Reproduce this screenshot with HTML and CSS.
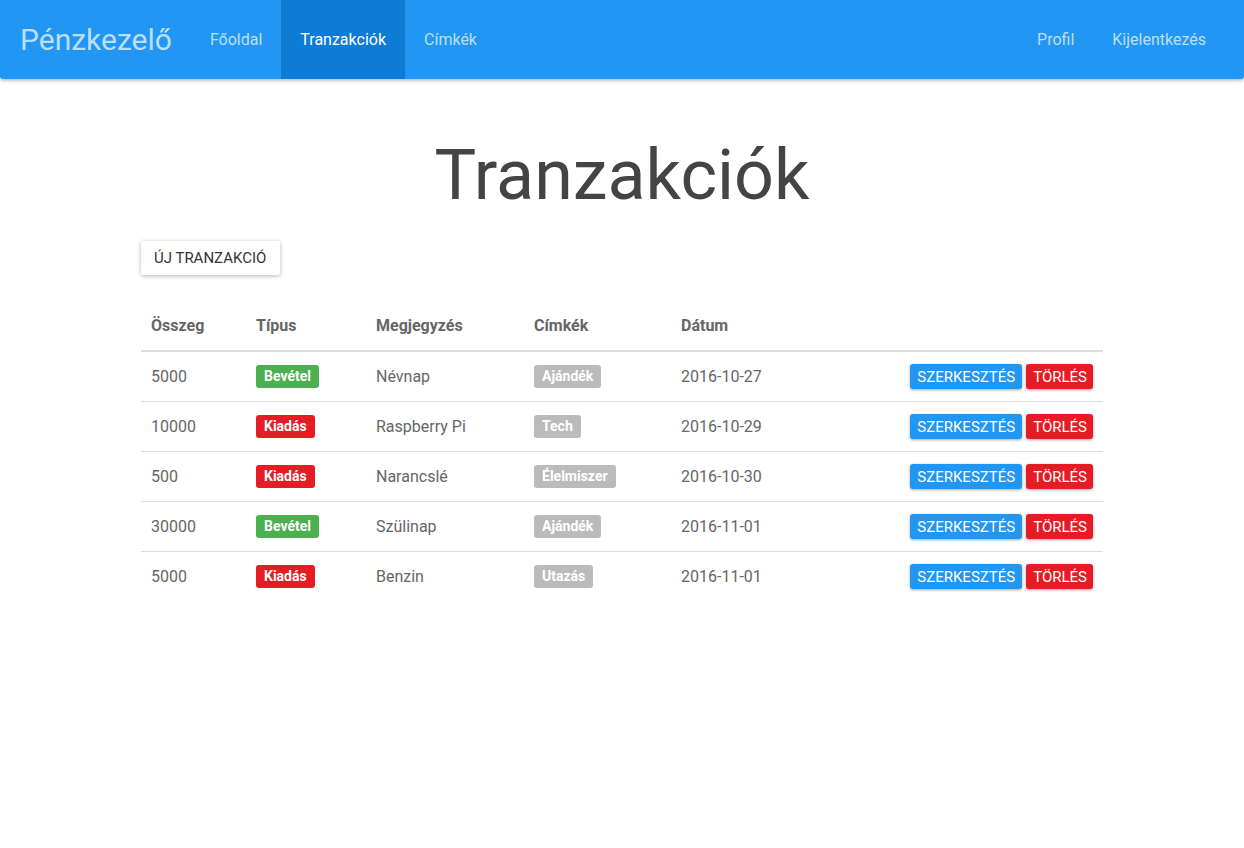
FILE: index.html
```html
<!DOCTYPE html>
<html lang="hu">
<head>
<meta charset="utf-8">
<title>Tranzakciók</title>
<link rel="stylesheet" href="styles.css">
</head>
<body>
<nav class="navbar">
  <a class="brand" href="#">Pénzkezelő</a>
  <ul class="nav">
    <li><a href="#">Főoldal</a></li>
    <li class="active"><a href="#">Tranzakciók</a></li>
    <li><a href="#">Címkék</a></li>
  </ul>
  <ul class="nav nav-right">
    <li><a href="#">Profil</a></li>
    <li><a href="#">Kijelentkezés</a></li>
  </ul>
</nav>
<main class="container">
  <h1 class="title">Tranzakciók</h1>
  <button class="btn-new">Új tranzakció</button>
  <table class="table">
    <thead>
      <tr>
        <th class="c-amount">Összeg</th>
        <th class="c-type">Típus</th>
        <th class="c-note">Megjegyzés</th>
        <th class="c-tags">Címkék</th>
        <th class="c-date">Dátum</th>
        <th class="c-actions"></th>
      </tr>
    </thead>
    <tbody>
      <tr>
        <td>5000</td>
        <td><span class="badge badge-in">Bevétel</span></td>
        <td>Névnap</td>
        <td><span class="badge badge-tag">Ajándék</span></td>
        <td>2016-10-27</td>
        <td class="c-actions"><button class="btn btn-edit">Szerkesztés</button><button class="btn btn-del">Törlés</button></td>
      </tr>
      <tr>
        <td>10000</td>
        <td><span class="badge badge-out">Kiadás</span></td>
        <td>Raspberry Pi</td>
        <td><span class="badge badge-tag">Tech</span></td>
        <td>2016-10-29</td>
        <td class="c-actions"><button class="btn btn-edit">Szerkesztés</button><button class="btn btn-del">Törlés</button></td>
      </tr>
      <tr>
        <td>500</td>
        <td><span class="badge badge-out">Kiadás</span></td>
        <td>Narancslé</td>
        <td><span class="badge badge-tag">Élelmiszer</span></td>
        <td>2016-10-30</td>
        <td class="c-actions"><button class="btn btn-edit">Szerkesztés</button><button class="btn btn-del">Törlés</button></td>
      </tr>
      <tr>
        <td>30000</td>
        <td><span class="badge badge-in">Bevétel</span></td>
        <td>Szülinap</td>
        <td><span class="badge badge-tag">Ajándék</span></td>
        <td>2016-11-01</td>
        <td class="c-actions"><button class="btn btn-edit">Szerkesztés</button><button class="btn btn-del">Törlés</button></td>
      </tr>
      <tr>
        <td>5000</td>
        <td><span class="badge badge-out">Kiadás</span></td>
        <td>Benzin</td>
        <td><span class="badge badge-tag">Utazás</span></td>
        <td>2016-11-01</td>
        <td class="c-actions"><button class="btn btn-edit">Szerkesztés</button><button class="btn btn-del">Törlés</button></td>
      </tr>
    </tbody>
  </table>
</main>
</body>
</html>
```

FILE: styles.css
```css
html, body {
  margin: 0;
  padding: 0;
  background: #fff;
}
body {
  font-family: Roboto, "Liberation Sans", sans-serif;
  color: #666;
  font-size: 16px;
}
a { text-decoration: none; }

.navbar {
  display: flex;
  align-items: stretch;
  height: 79px;
  background: #2196f3;
  border-radius: 0 0 3px 3px;
  box-shadow: 0 1px 4px rgba(0,0,0,0.35);
}
.brand {
  display: flex;
  align-items: center;
  padding: 0 19px 0 20px;
  font-size: 30px;
  color: #bbdefb;
  font-weight: 400;
}
.nav {
  display: flex;
  list-style: none;
  margin: 0;
  padding: 0;
}
.nav-right { margin-left: auto; margin-right: 19px; }
.nav li { display: flex; }
.nav a {
  display: flex;
  align-items: center;
  padding: 0 19px;
  font-size: 16px;
  color: #bbdefb;
}
.nav li.active a {
  background: #0e7bd5;
  color: #fff;
}

.container {
  width: 962px;
  margin: 0 auto;
}
.title {
  margin: 56px 0 26px;
  text-align: center;
  font-size: 70px;
  font-weight: 400;
  line-height: 80px;
  color: #444;
}
.btn-new {
  display: block;
  height: 34px;
  padding: 0 14px 0 13px;
  border: 0;
  border-radius: 2px;
  background: #fff;
  color: #333;
  font-family: inherit;
  font-size: 15px;
  text-transform: uppercase;
  box-shadow: 0 1px 4px rgba(0,0,0,0.3);
}

.table {
  width: 100%;
  margin-top: 26px;
  border-collapse: collapse;
  border-spacing: 0;
}
.table th {
  height: 49px;
  padding: 0 10px;
  text-align: left;
  font-weight: 700;
  color: #666;
  border-bottom: 2px solid #ddd;
}
.table td {
  height: 49px;
  padding: 0 10px;
  color: #666;
  border-bottom: 1px solid #ddd;
}
.table tbody tr:last-child td { border-bottom: 0; }
.c-amount { width: 85px; }
.c-type { width: 100px; }
.c-note { width: 138px; }
.c-tags { width: 127px; }
.c-date { width: 130px; }
.c-actions { text-align: right; white-space: nowrap; }
.table td.c-actions { text-align: right; }

.badge {
  display: inline-block;
  padding: 0 8px;
  height: 23px;
  line-height: 22px;
  border-radius: 3px;
  font-size: 14px;
  font-weight: 700;
  color: #fff;
  vertical-align: middle;
}
.badge-in { background: #4caf50; }
.badge-out { background: #e51c23; }
.badge-tag { background: #bbbbbb; }

.btn {
  display: inline-block;
  height: 25px;
  padding: 0 7px;
  margin-left: 4px;
  border: 0;
  border-radius: 3px;
  font-family: inherit;
  font-size: 15px;
  color: #fff;
  text-transform: uppercase;
  vertical-align: middle;
  box-shadow: 0 1px 3px rgba(0,0,0,0.35);
}
.btn-del { padding: 0 6px 0 7px; }
.btn-edit { background: #2196f3; }
.btn-del { background: #e51c23; }
```
